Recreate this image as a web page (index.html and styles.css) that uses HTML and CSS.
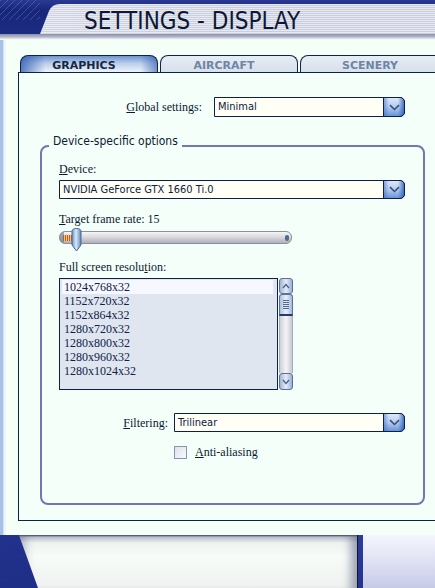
FILE: index.html
```html
<!DOCTYPE html>
<html>
<head>
<meta charset="utf-8">
<title>Settings - Display</title>
<link rel="stylesheet" href="styles.css">
</head>
<body>
<div class="screen">
  <header class="header">
    <div class="titlebar">
      <h1 class="title">SETTINGS - DISPLAY</h1>
    </div>
    <div class="header-shadow"></div>
  </header>

  <div class="main">
    <div class="side-rail"></div>
    <div class="content">
      <nav class="tabs">
        <div class="tab tab-active">GRAPHICS</div>
        <div class="tab">AIRCRAFT</div>
        <div class="tab tab-last">SCENERY</div>
      </nav>

      <div class="panel">
        <div class="row-global">
          <span class="lbl lbl-global"><u>G</u>lobal settings:</span>
          <div class="combo combo-global">
            <span class="combo-text">Minimal</span>
            <span class="combo-btn"><svg width="11" height="7" viewBox="0 0 11 7"><path d="M1 1.2 L5.5 5.5 L10 1.2" fill="none" stroke="#34507c" stroke-width="1.6"/></svg></span>
          </div>
        </div>

        <fieldset class="group">
          <legend class="group-title">Device-specific options</legend>

          <span class="lbl lbl-device"><u>D</u>evice:</span>
          <div class="combo combo-device">
            <span class="combo-text">NVIDIA GeForce GTX 1660 Ti.0</span>
            <span class="combo-btn"><svg width="11" height="7" viewBox="0 0 11 7"><path d="M1 1.2 L5.5 5.5 L10 1.2" fill="none" stroke="#34507c" stroke-width="1.6"/></svg></span>
          </div>

          <span class="lbl lbl-rate"><u>T</u>arget frame rate: 15</span>
          <div class="slider">
            <div class="slider-track">
              <span class="slider-fill"></span>
              <span class="slider-end"></span>
            </div>
            <svg class="slider-thumb" width="11" height="24" viewBox="0 0 11 24">
              <defs>
                <linearGradient id="tg" x1="0" x2="1" y1="0" y2="0">
                  <stop offset="0" stop-color="#6f93c4"/>
                  <stop offset="0.45" stop-color="#d8e8f8"/>
                  <stop offset="1" stop-color="#5f86bc"/>
                </linearGradient>
              </defs>
              <path d="M1 3.5 Q1 0.5 5.5 0.5 Q10 0.5 10 3.5 V17 L5.5 23 L1 17 Z" fill="url(#tg)" stroke="#4a6592" stroke-width="1"/>
            </svg>
          </div>

          <span class="lbl lbl-res">Full screen resolu<u>t</u>ion:</span>
          <div class="list-wrap">
            <div class="listbox">
              <div class="list-item selected">1024x768x32</div>
              <div class="list-item">1152x720x32</div>
              <div class="list-item">1152x864x32</div>
              <div class="list-item">1280x720x32</div>
              <div class="list-item">1280x800x32</div>
              <div class="list-item">1280x960x32</div>
              <div class="list-item">1280x1024x32</div>
            </div>
            <div class="scrollbar">
              <div class="sb-btn sb-up"><svg width="8" height="6" viewBox="0 0 8 6"><path d="M1 5 L4 1.5 L7 5" fill="none" stroke="#4a5f86" stroke-width="1.2"/></svg></div>
              <div class="sb-thumb"><span class="grip"></span></div>
              <div class="sb-track"></div>
              <div class="sb-btn sb-down"><svg width="8" height="6" viewBox="0 0 8 6"><path d="M1 1 L4 4.5 L7 1" fill="none" stroke="#4a5f86" stroke-width="1.2"/></svg></div>
            </div>
          </div>

          <div class="row-filter">
            <span class="lbl lbl-filter"><u>F</u>iltering:</span>
            <div class="combo combo-filter">
              <span class="combo-text">Trilinear</span>
              <span class="combo-btn"><svg width="11" height="7" viewBox="0 0 11 7"><path d="M1 1.2 L5.5 5.5 L10 1.2" fill="none" stroke="#34507c" stroke-width="1.6"/></svg></span>
            </div>
          </div>

          <div class="row-check">
            <span class="checkbox"></span>
            <span class="lbl lbl-check"><u>A</u>nti-aliasing</span>
          </div>
        </fieldset>
      </div>
    </div>
  </div>

  <footer class="footer">
    <div class="footer-base">
      <div class="footer-panel"></div>
    </div>
    <div class="footer-strip"></div>
    <div class="footer-rest"></div>
  </footer>
</div>
</body>
</html>
```

FILE: styles.css
```css
* { box-sizing: border-box; }
html, body { margin: 0; padding: 0; }
body {
  width: 435px;
  height: 588px;
  overflow: hidden;
  background: #f4fff8;
  font-family: "Liberation Serif", serif;
  color: #0b1a33;
}
.screen {
  display: flex;
  flex-direction: column;
  height: 588px;
  width: 435px;
  overflow: hidden;
}

/* ---------- header ---------- */
.header {
  flex: none;
  height: 40px;
  display: flex;
  flex-direction: column;
  background: #1c2a7c;
}
.titlebar {
  height: 34px;
  padding-top: 4px;
  padding-left: 40px;
  background:
    repeating-linear-gradient(135deg, rgba(120,150,220,0.35) 0 1px, transparent 1px 5px) 0 0 / 40px 20px no-repeat,
    linear-gradient(#2a3a94, #18267a 30%, #1c2c80);
}
.title {
  margin: 0;
  height: 30px;
  padding-left: 44px;
  clip-path: path('M20 0 H400 V30 H0 L9 7 Q12 0 20 0 Z');
  background:
    linear-gradient(to right, rgba(255,255,255,0.15), rgba(255,255,255,0) 60%),
    repeating-linear-gradient(to bottom, #e6e9f1 0 1px, #c9cddc 1px 2px);
  font-family: "DejaVu Sans Condensed", "DejaVu Sans", sans-serif;
  font-stretch: condensed;
  font-weight: normal;
  font-size: 24px;
  line-height: 34px;
  color: #0d1834;
  white-space: nowrap;
}
.header-shadow {
  height: 6px;
  background: linear-gradient(#8a90a8, #b4b8c8 50%, #e6e9ee 80%, #ffffff);
}

/* ---------- main ---------- */
.main {
  flex: none;
  height: 495px;
  display: flex;
}
.side-rail {
  flex: none;
  width: 6px;
  background: linear-gradient(to right, #a7c1e6 0 3px, #d4e2f4 3px 4px, #eef4fb 4px 6px);
}
.content {
  flex: 1;
  min-width: 0;
  padding-top: 15px;
}

/* tabs */
.tabs {
  display: flex;
  gap: 2px;
  margin-left: 14px;
  height: 17px;
}
.tab {
  flex: none;
  width: 138px;
  height: 17px;
  border: 1px solid #0f2346;
  border-bottom: none;
  border-radius: 8px 8px 0 0;
  background: linear-gradient(#e6ecf4, #d8e0eb);
  color: #6d86a6;
  font-family: "DejaVu Sans", sans-serif;
  font-weight: bold;
  font-size: 11px;
  line-height: 19px;
  text-align: center;
  padding-right: 10px;
}
.tab-active {
  color: #17283f;
  background:
    linear-gradient(to right, rgba(40,85,175,0.75), rgba(40,85,175,0) 18%, rgba(40,85,175,0) 88%, rgba(40,85,175,0.6)),
    linear-gradient(to bottom, #6e93d2 0%, #b9cdea 45%, #eef3fa 100%);
}
.tab-last { width: 150px; }

/* panel */
.panel {
  margin-left: 12px;
  width: 430px;
  height: 449px;
  border: 1px solid #0c2244;
  background: #f5fff9;
  padding-left: 21px;
}

.lbl {
  font-family: "Liberation Serif", serif;
  font-size: 12px;
  line-height: 14px;
  color: #0b1a33;
}
.lbl u { text-decoration: underline; text-underline-offset: 1px; }

.row-global {
  width: 385px;
  margin-top: 24px;
  padding-right: 20px;
  display: flex;
  justify-content: flex-end;
  align-items: center;
}
.lbl-global { margin-right: 12px; }

/* combos */
.combo {
  display: flex;
  height: 19px;
  border: 1px solid #0d2147;
  border-radius: 0 5px 5px 0;
  background: #fffff6;
}
.combo-global { width: 191px; height: 20px; }
.combo-device { width: 346px; margin-top: 4px; }
.combo-filter { width: 231px; }
.combo-text {
  flex: 1;
  padding-left: 3px;
  font-family: "DejaVu Sans Condensed", "DejaVu Sans", sans-serif;
  font-stretch: condensed;
  font-size: 11px;
  line-height: 17px;
  color: #0c2244;
  white-space: nowrap;
  overflow: hidden;
}
.combo-btn {
  flex: none;
  width: 22px;
  margin: -1px -1px -1px 0;
  border: 1px solid #0d2147;
  border-radius: 0 5px 5px 0;
  background:
    linear-gradient(to right, rgba(60,110,200,0.55), rgba(60,110,200,0) 25%, rgba(60,110,200,0) 70%, rgba(40,90,190,0.8)),
    linear-gradient(to bottom, #dce8f8, #b4cced 50%, #6a94d8);
  display: flex;
  align-items: center;
  justify-content: center;
}

/* group box */
.group {
  margin: 17px 0 0 0;
  width: 385px;
  height: 371px;
  border: 2px solid #7078b2;
  border-radius: 8px;
  padding: 0 18px 0 17px;
  min-width: 0;
}
.group-title {
  margin-left: -10px;
  padding: 0 4px 8px 4px;
  font-family: "DejaVu Sans Condensed", "DejaVu Sans", sans-serif;
  font-stretch: condensed;
  font-size: 12px;
  line-height: 15px;
  color: #0b1a33;
}
.lbl-device { display: block; margin-top: 5px; }
.lbl-rate { display: block; margin-top: 13px; }
.lbl-res { display: block; margin-top: 10px; }

/* slider */
.slider {
  position: relative;
  margin-top: 2px;
  width: 233px;
  height: 22px;
  padding-top: 3px;
}
.slider-track {
  position: relative;
  height: 13px;
  border: 1px solid #8b909c;
  border-radius: 6px;
  background:
    linear-gradient(to right, rgba(90,120,170,0.6) 0 4px, transparent 4px),
    linear-gradient(#f6f6f6, #dadadf 45%, #b0b0b8);
  overflow: hidden;
}
.slider-fill {
  position: absolute;
  left: 3px;
  top: 3px;
  width: 9px;
  height: 6px;
  background: repeating-linear-gradient(to right, #c4600c 0 1px, #f2c48a 1px 2px);
}
.slider-end {
  position: absolute;
  right: 2px;
  top: 3px;
  width: 4px;
  height: 6px;
  border-radius: 2px;
  background: #4f6a90;
}
.slider-thumb {
  position: absolute;
  left: 12px;
  top: 0;
}

/* listbox */
.list-wrap {
  display: flex;
  gap: 1px;
  margin-top: 4px;
  height: 112px;
}
.listbox {
  width: 219px;
  height: 112px;
  border: 1px solid #0d2147;
  background: #dfe6f0;
  padding: 1px 4px 0 2px;
}
.list-item {
  height: 14px;
  padding-left: 2px;
  font-family: "Liberation Serif", serif;
  font-size: 12px;
  line-height: 14px;
  color: #102248;
}
.list-item.selected { background: #f7f8ff; }

.scrollbar {
  width: 14px;
  height: 112px;
  display: flex;
  flex-direction: column;
}
.sb-btn {
  flex: none;
  height: 16px;
  border: 1px solid #5d7099;
  border-radius: 3px;
  background: linear-gradient(to right, #9fb4d6, #e4ecf8 50%, #9ab0d2);
  display: flex;
  align-items: center;
  justify-content: center;
}
.sb-down { height: 17px; }
.sb-thumb {
  flex: none;
  height: 22px;
  border: 1px solid #5d7099;
  border-bottom: 2px solid #243a68;
  border-radius: 3px 3px 0 0;
  background: linear-gradient(to right, #a9bfdf, #e8f0fa 50%, #a3badc);
  display: flex;
  align-items: center;
  justify-content: center;
}
.grip {
  width: 6px;
  height: 9px;
  background: repeating-linear-gradient(to bottom, #56688e 0 1px, transparent 1px 2px);
}
.sb-track {
  flex: 1;
  border-left: 1px solid #a4acbe;
  border-right: 1px solid #a4acbe;
  background: linear-gradient(to right, #cfd0d8, #f4f4f8 50%, #c9cad2);
}

/* filtering */
.row-filter {
  display: flex;
  align-items: center;
  margin-top: 23px;
}
.lbl-filter {
  width: 109px;
  margin-right: 6px;
  text-align: right;
}

/* checkbox */
.row-check {
  display: flex;
  align-items: center;
  margin-top: 13px;
  padding-left: 115px;
}
.checkbox {
  flex: none;
  width: 13px;
  height: 13px;
  border: 1px solid #8a92b8;
  background: linear-gradient(135deg, #dfe2ee, #f8f9fc);
  margin-right: 8px;
}

/* ---------- footer ---------- */
.footer {
  flex: none;
  height: 53px;
  display: flex;
}
.footer-base {
  flex: none;
  width: 358px;
  background: linear-gradient(160deg, #22328c 0%, #1c2c84 60%, #0c1338 100%);
  display: flex;
}
.footer-panel {
  margin-left: 19px;
  width: 339px;
  border-right: 1px solid #10162c;
  clip-path: polygon(0 0, 100% 0, 100% 100%, 19px 100%);
  background: linear-gradient(to bottom, #3a4258 0, #b8bccb 2px, #eef2f0 8px, #f8fcf8 40%, #eef1f0 100%);
  box-shadow: inset -14px 0 10px -8px rgba(80,90,120,0.55), inset 14px 0 10px -8px rgba(80,90,120,0.4);
}
.footer-strip {
  flex: none;
  width: 5px;
  background: linear-gradient(#2c3c9c, #23338e);
}
.footer-rest {
  flex: 1;
  background: linear-gradient(#f4f5fc, #e4e6f6 40%, #c6cae6);
}
```
